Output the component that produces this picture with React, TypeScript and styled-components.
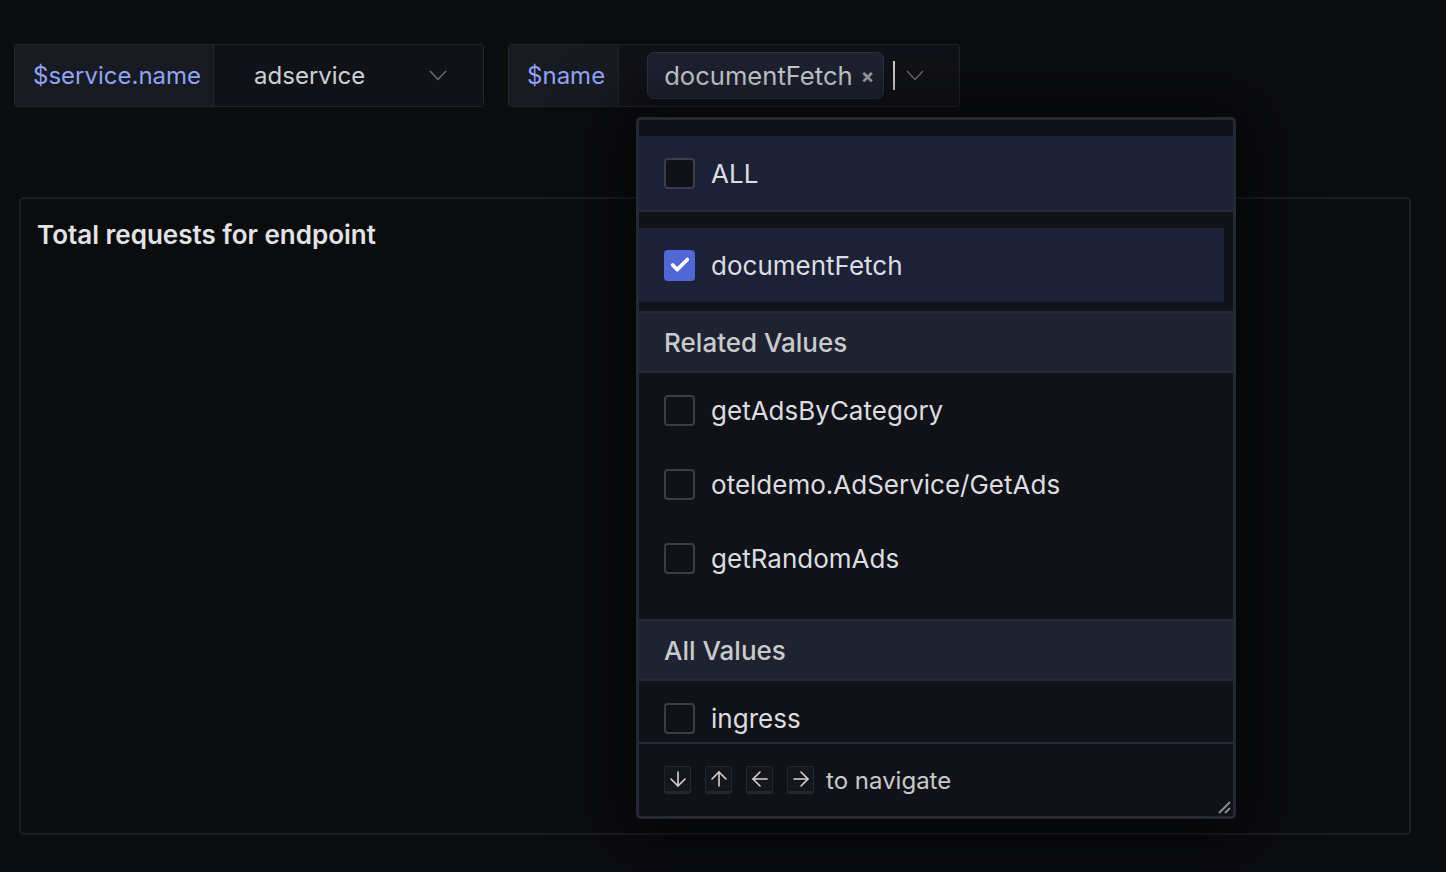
import { createGlobalStyle } from "styled-components";
import styled from "styled-components";
import { ArrowDown, ArrowUp, ArrowLeft, ArrowRight, Check } from "lucide-react";

const GlobalStyle = createGlobalStyle`
  html, body {
    margin: 0;
    padding: 0;
    background: #0b0c0e;
    font-family: Inter, "Noto Sans", sans-serif;
    color: #d8d9dc;
  }
  * { box-sizing: border-box; }
`;

const Page = styled.div`
  width: 1446px;
  height: 872px;
  padding: 44px 14px 0 14px;
  overflow: hidden;
`;

const Toolbar = styled.div`
  display: flex;
  gap: 24px;
`;

const VariableGroup = styled.div`
  position: relative;
  display: flex;
  height: 63px;
  border: 1px solid #23252d;
  border-radius: 3px;
`;

const Label = styled.div<{ $padRight: number }>`
  display: flex;
  align-items: center;
  padding: 0 ${(p) => p.$padRight}px 0 18px;
  background: #181a21;
  border-right: 1px solid #23252d;
  color: #8fa3f7;
  font-size: 24px;
  border-radius: 3px 0 0 3px;
`;

const ValueBox = styled.div<{ $width: number; $padLeft: number }>`
  display: flex;
  align-items: center;
  width: ${(p) => p.$width}px;
  padding: 0 36px 0 ${(p) => p.$padLeft}px;
  background: #111217;
  font-size: 24px;
  color: #cfd0d3;
  border-radius: 0 3px 3px 0;
`;

const Spacer = styled.div`
  flex: 1;
`;

const Chip = styled.div`
  display: flex;
  align-items: center;
  flex-shrink: 0;
  height: 47px;
  padding: 0 9px 0 16px;
  gap: 8px;
  background: #1e2130;
  border: 1px solid #2e3140;
  border-radius: 7px;
  color: #cfd0d3;
  font-size: 25.6px;
`;

const ChipClose = styled.span`
  font-size: 20px;
  font-weight: 700;
  color: #a3a5ab;
`;

const Caret = styled.div`
  flex-shrink: 0;
  width: 2px;
  height: 29px;
  background: #d0d1d4;
  margin: 0 11px 0 9px;
`;

const ChevronSvg = styled.svg`
  flex-shrink: 0;
`;

const Panel = styled.div`
  margin: 90px 0 0 5px;
  width: 1392px;
  height: 638px;
  border: 2px solid #1c1e25;
  border-radius: 5px;
  padding: 20px 16px;
`;

const PanelTitle = styled.div`
  font-size: 26px;
  font-weight: 600;
  color: #e2e3e5;
`;

const Dropdown = styled.div`
  position: absolute;
  left: 127px;
  top: 72px;
  width: 600px;
  height: 702px;
  background: #111217;
  border: 3px solid #262833;
  border-radius: 5px;
  box-shadow: 0 6px 60px 20px rgba(0, 0, 0, 0.55);
  display: flex;
  flex-direction: column;
  overflow: hidden;
  z-index: 10;
`;

const Gap = styled.div<{ $h: number }>`
  height: ${(p) => p.$h}px;
  flex-shrink: 0;
`;

const Option = styled.div<{ $active?: boolean; $h?: number; $inset?: boolean }>`
  display: flex;
  align-items: center;
  gap: 16px;
  height: ${(p) => p.$h ?? 74}px;
  flex-shrink: 0;
  padding-left: 25px;
  margin-right: ${(p) => (p.$inset ? 9 : 0)}px;
  background: ${(p) => (p.$active ? "#1d2137" : "transparent")};
  font-size: 26px;
  color: #dcdde0;
`;

const Box = styled.div<{ $checked?: boolean }>`
  width: 31px;
  height: 31px;
  border-radius: 4px;
  border: 2px solid ${(p) => (p.$checked ? "#5067d6" : "#3b3e48")};
  background: ${(p) => (p.$checked ? "#5067d6" : "#111217")};
  display: flex;
  align-items: center;
  justify-content: center;
  flex-shrink: 0;
`;

const Divider = styled.div`
  height: 2px;
  background: #272a36;
  flex-shrink: 0;
`;

const GroupHeader = styled.div`
  display: flex;
  align-items: center;
  height: 58px;
  flex-shrink: 0;
  padding-left: 25px;
  background: #1f2230;
  font-size: 26px;
  font-weight: 500;
  color: #c9cacd;
`;

const List = styled.div`
  height: 61px;
  overflow: hidden;
  flex-shrink: 0;
`;

const Footer = styled.div`
  position: relative;
  flex: 1;
  display: flex;
  align-items: center;
  gap: 14px;
  padding-left: 25px;
  border-top: 2px solid #272a36;
  color: #c9cacd;
  font-size: 24px;
`;

const Key = styled.div`
  width: 27px;
  height: 28px;
  border-radius: 3px;
  background: #15161b;
  border: 1px solid #25272f;
  border-bottom-width: 3px;
  display: flex;
  align-items: center;
  justify-content: center;
  color: #d4d5d8;
  & svg {
    flex-shrink: 0;
  }
`;

const FooterText = styled.span`
  margin-left: -2px;
`;

const Resize = styled.svg`
  position: absolute;
  right: 2px;
  bottom: 2px;
`;

const Chevron = () => (
  <ChevronSvg width="18" height="11" viewBox="0 0 18 11">
    <polyline points="1,1 9,9.5 17,1" fill="none" stroke="#6b6d76" strokeWidth="1.5" />
  </ChevronSvg>
);

const related = ["getAdsByCategory", "oteldemo.AdService/GetAds", "getRandomAds"];

export default function App() {
  return (
    <Page>
      <GlobalStyle />
      <Toolbar>
        <VariableGroup>
          <Label $padRight={12}>$service.name</Label>
          <ValueBox $width={269} $padLeft={40}>
            adservice
            <Spacer />
            <Chevron />
          </ValueBox>
        </VariableGroup>
        <VariableGroup>
          <Label $padRight={13}>$name</Label>
          <ValueBox $width={340} $padLeft={28}>
            <Chip>
              documentFetch
              <ChipClose>×</ChipClose>
            </Chip>
            <Caret />
            <Chevron />
          </ValueBox>
          <Dropdown>
            <Gap $h={16} />
            <Option $active>
              <Box />
              ALL
            </Option>
            <Divider />
            <Gap $h={16} />
            <Option $active $inset>
              <Box $checked>
                <Check size={22} strokeWidth={4} color="#ffffff" />
              </Box>
              documentFetch
            </Option>
            <Gap $h={9} />
            <Divider />
            <GroupHeader>Related Values</GroupHeader>
            <Divider />
            {related.map((r) => (
              <Option key={r}>
                <Box />
                {r}
              </Option>
            ))}
            <Gap $h={24} />
            <Divider />
            <GroupHeader>All Values</GroupHeader>
            <Divider />
            <List>
              <Option>
                <Box />
                ingress
              </Option>
            </List>
            <Footer>
              <Key>
                <ArrowDown size={24} strokeWidth={1.6} />
              </Key>
              <Key>
                <ArrowUp size={24} strokeWidth={1.6} />
              </Key>
              <Key>
                <ArrowLeft size={24} strokeWidth={1.6} />
              </Key>
              <Key>
                <ArrowRight size={24} strokeWidth={1.6} />
              </Key>
              <FooterText>to navigate</FooterText>
              <Resize width="14" height="14" viewBox="0 0 14 14">
                <line x1="2" y1="13" x2="13" y2="2" stroke="#8b8d94" strokeWidth="2" />
                <line x1="8" y1="13" x2="13" y2="8" stroke="#8b8d94" strokeWidth="2" />
              </Resize>
            </Footer>
          </Dropdown>
        </VariableGroup>
      </Toolbar>
      <Panel>
        <PanelTitle>Total requests for endpoint</PanelTitle>
      </Panel>
    </Page>
  );
}
